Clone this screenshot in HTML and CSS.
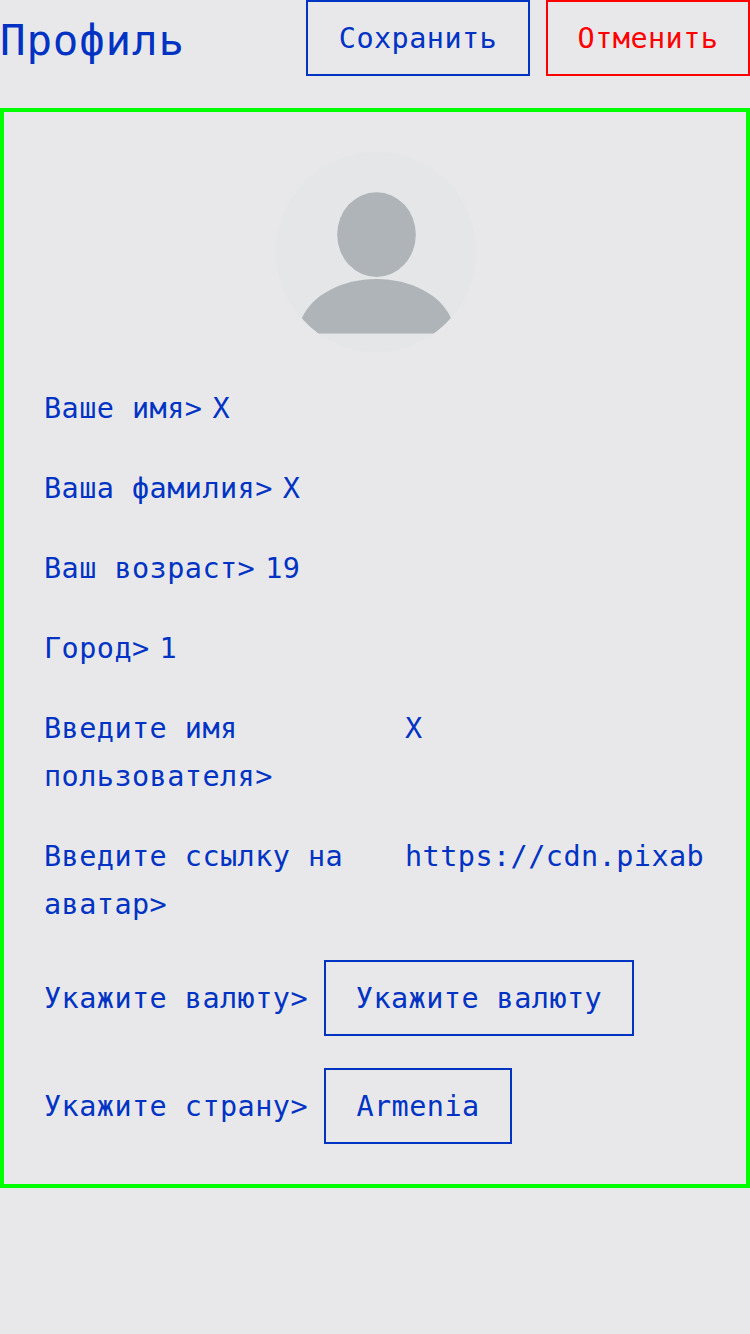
FILE: index.html
```html
<!DOCTYPE html>
<html lang="ru">
<head>
<meta charset="utf-8">
<title>Профиль</title>
<link rel="stylesheet" href="styles.css">
</head>
<body>
<header class="header">
  <h1 class="title">Профиль</h1>
  <div class="actions">
    <button class="button button-save">Сохранить</button>
    <button class="button button-cancel">Отменить</button>
  </div>
</header>
<main class="card">
  <svg class="avatar" viewBox="0 0 200 200">
    <defs><clipPath id="round"><circle cx="100" cy="100" r="100"/></clipPath></defs>
    <g clip-path="url(#round)">
      <rect width="200" height="200" fill="#e4e6e7"/>
      <ellipse cx="100.5" cy="82.6" rx="39.3" ry="42.4" fill="#aeb4b7"/>
      <path d="M25.8 166.3C36 143 66 127 100.4 127S165 143 175 166.3Q167.5 175 158.5 181.5H42.3Q33 175 25.8 166.3Z" fill="#aeb4b7"/>
    </g>
  </svg>
  <div class="row"><span class="label">Ваше имя&gt;</span><input class="value" value="X"></div>
  <div class="row"><span class="label">Ваша фамилия&gt;</span><input class="value" value="X"></div>
  <div class="row"><span class="label">Ваш возраст&gt;</span><input class="value" value="19"></div>
  <div class="row"><span class="label">Город&gt;</span><input class="value" value="1"></div>
  <div class="row row-wide"><span class="label">Введите имя пользователя&gt;</span><input class="value" value="X"></div>
  <div class="row row-wide"><span class="label">Введите ссылку на аватар&gt;</span><input class="value" value="https://cdn.pixab"></div>
  <div class="row row-select"><span class="label">Укажите валюту&gt;</span><button class="button button-currency">Укажите валюту</button></div>
  <div class="row row-select"><span class="label">Укажите страну&gt;</span><button class="button button-country">Armenia</button></div>
</main>
</body>
</html>
```
FILE: styles.css
```css
* { box-sizing: border-box; }

body {
  margin: 0;
  min-height: 100vh;
  background: #e8e8ea;
  color: #0033c4;
  font: 28.5px/48px "DejaVu Sans Mono", monospace;
  letter-spacing: 0.44px;
}

.header {
  display: flex;
  justify-content: space-between;
  height: 76px;
  margin-bottom: 32px;
}

.title {
  margin: 0;
  padding-top: 3px;
  font-size: 42.5px;
  font-weight: 400;
  line-height: 76px;
  letter-spacing: 0.81px;
}

.actions { display: flex; gap: 16px; }

.button {
  height: 76px;
  padding: 2px 0 0;
  border: 2px solid #0033c4;
  background: none;
  color: #0033c4;
  font: inherit;
  letter-spacing: inherit;
  white-space: nowrap;
}

.button-save { width: 224px; }
.button-cancel { width: 204px; border-color: #f00; color: #f00; }
.button-currency { width: 310px; }
.button-country { width: 188px; }

.card {
  display: flex;
  flex-direction: column;
  gap: 32px;
  padding: 40px;
  border: 4px solid #0f0;
}

.avatar {
  width: 200px;
  height: 200px;
  margin-left: 232px;
}

.row { display: flex; align-items: flex-start; gap: 10px; }

.label {
  flex: none;
  margin-bottom: -1px;
  padding-top: 1px;
}

.value {
  flex: 1;
  min-width: 0;
  height: 48px;
  padding: 2px 0 0;
  border: 0;
  background: none;
  color: inherit;
  font: inherit;
  letter-spacing: inherit;
}

.row-wide .label { width: 351px; padding-right: 30px; }
.row-select { align-items: center; gap: 16px; }
.row-select .label { width: 264px; white-space: nowrap; }
```
